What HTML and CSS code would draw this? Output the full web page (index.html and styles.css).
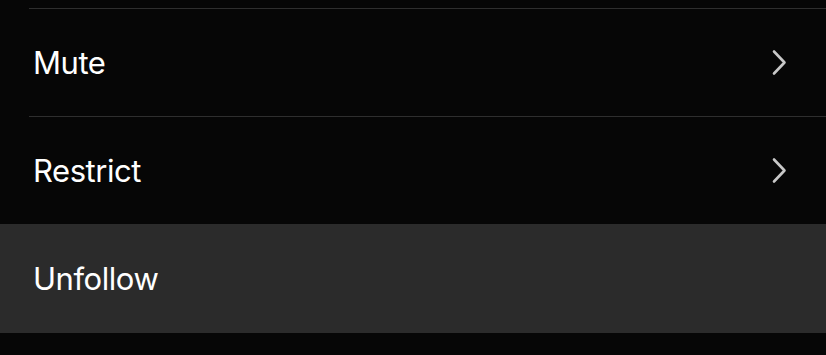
FILE: index.html
```html
<!DOCTYPE html>
<html>
<head>
<meta charset="utf-8">
<link rel="stylesheet" href="styles.css">
</head>
<body>
<div class="sheet">
  <div class="top-gap"></div>
  <div class="row sep">
    <span class="label">Mute</span>
    <svg class="chev" width="16" height="27" viewBox="0 0 16 27"><polyline points="3,2.5 13.5,13.5 3,24.5" fill="none" stroke="#c8c8c8" stroke-width="2.6" stroke-linecap="round" stroke-linejoin="round"/></svg>
  </div>
  <div class="row sep">
    <span class="label">Restrict</span>
    <svg class="chev" width="16" height="27" viewBox="0 0 16 27"><polyline points="3,2.5 13.5,13.5 3,24.5" fill="none" stroke="#c8c8c8" stroke-width="2.6" stroke-linecap="round" stroke-linejoin="round"/></svg>
  </div>
  <div class="row active">
    <span class="label">Unfollow</span>
  </div>
</div>
</body>
</html>
```
FILE: styles.css
```css
html, body {
  margin: 0;
  padding: 0;
  background: #060606;
  width: 826px;
  height: 355px;
  overflow: hidden;
}
.sheet {
  font-family: "Inter", "Roboto", sans-serif;
  color: #ffffff;
}
.top-gap {
  height: 8px;
}
.row {
  position: relative;
  height: 108px;
  display: flex;
  align-items: center;
  justify-content: space-between;
  padding: 0 39px 0 33px;
  box-sizing: border-box;
}
.row.sep::before {
  content: "";
  position: absolute;
  top: 0;
  left: 29px;
  right: 0;
  height: 1px;
  background: #2e2e2e;
}
.row.sep {
  padding-top: 1px;
}
.row.active {
  background: #2b2b2b;
  height: 109px;
}
.label {
  font-size: 31px;
  font-weight: 400;
  letter-spacing: -0.45px;
}
.chev {
  display: block;
}
```
